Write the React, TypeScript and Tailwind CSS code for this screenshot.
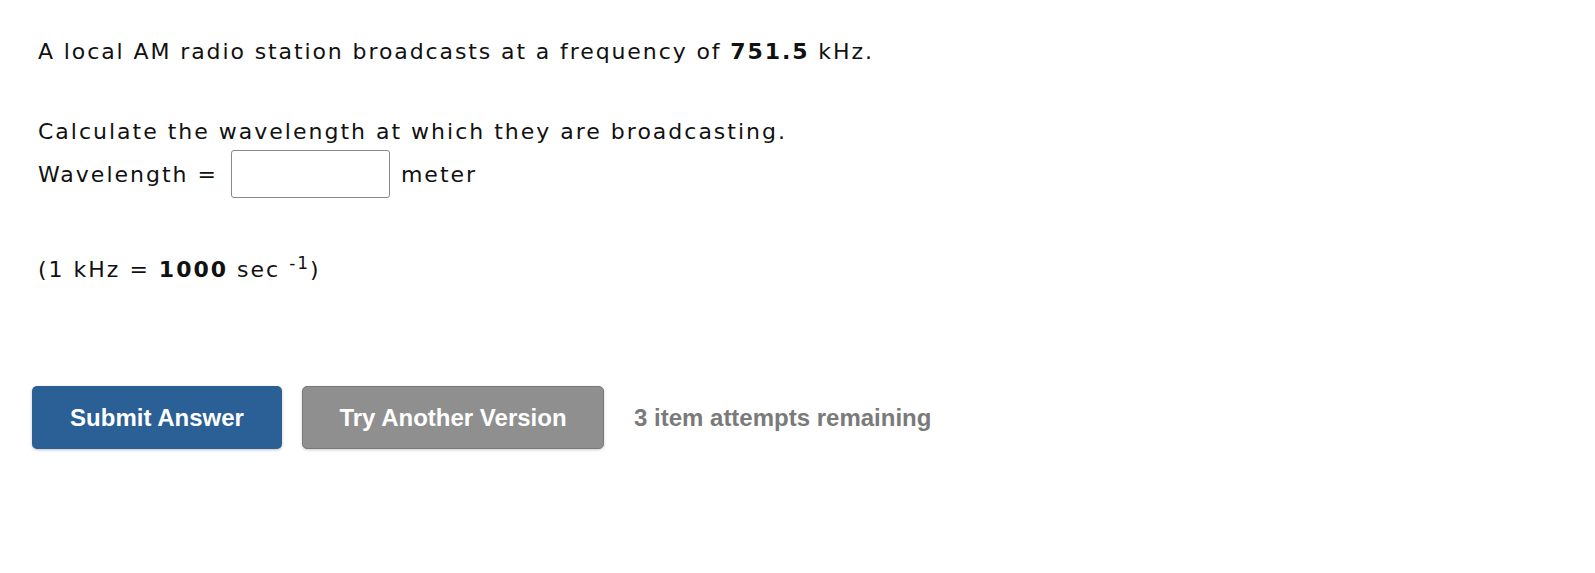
export default function App() {
  return (
    <main className="min-h-screen bg-white px-[38px] pt-[36px] text-[#111] font-['DejaVu_Sans',Verdana,sans-serif] text-[22px] tracking-[2px]">
      <p className="leading-[32px] tracking-[1.9px]">
        A local AM radio station broadcasts at a frequency of <b>751.5</b> kHz.
      </p>

      <p className="mt-[48px] leading-[32px]">Calculate the wavelength at which they are broadcasting.</p>
      <div className="mt-[2px] flex items-center">
        <span>Wavelength =</span>
        <input
          type="text"
          className="ml-[13px] h-[48px] w-[159px] rounded-[3px] border border-[#888] bg-white px-2 outline-none"
        />
        <span className="ml-[11px]">meter</span>
      </div>

      <p className="mt-[56px] leading-[32px]">
        (1 kHz = <b>1000</b> sec <sup className="text-[17px]">-1</sup>)
      </p>

      <div className="-ml-[6px] mt-[100px] flex items-center font-['Liberation_Sans',Arial,sans-serif] font-bold text-[24px] tracking-normal">
        <button
          type="button"
          className="h-[63px] w-[250px] rounded-[5px] bg-[#2a6095] text-white shadow-[0_1px_3px_rgba(0,0,0,0.25)]"
        >
          Submit Answer
        </button>
        <button
          type="button"
          className="ml-[20px] h-[63px] w-[302px] rounded-[5px] border border-[#7a7a7a] bg-[#8f8f8f] text-white shadow-[0_1px_3px_rgba(0,0,0,0.2)]"
        >
          Try Another Version
        </button>
        <span className="ml-[30px] text-[#7a7a7a]">3 item attempts remaining</span>
      </div>
    </main>
  );
}
